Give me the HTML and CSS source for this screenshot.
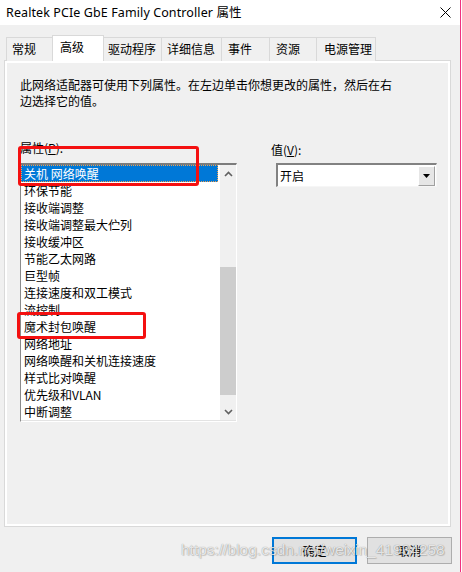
FILE: index.html
```html
<!DOCTYPE html>
<html lang="zh-CN">
<head>
  <meta charset="UTF-8" />
  <title>Realtek PCIe GbE Family Controller 属性</title>
  <link rel="stylesheet" href="styles.css">
</head>
<body>
  <div class="window">
    <div class="titlebar">
      <span class="title">Realtek PCIe GbE Family Controller 属性</span>
      <svg class="close" width="11" height="11" viewBox="0 0 11 11">
        <path d="M0.5 0.5 L10.5 10.5 M10.5 0.5 L0.5 10.5" stroke="#000" stroke-width="1" fill="none"/>
      </svg>
    </div>

    <div class="tabs">
      <div class="tab t1">常规</div>
      <div class="tab t2 active">高级</div>
      <div class="tab t3">驱动程序</div>
      <div class="tab t4">详细信息</div>
      <div class="tab t5">事件</div>
      <div class="tab t6">资源</div>
      <div class="tab t7">电源管理</div>
    </div>

    <div class="panel">
      <p class="desc">此网络适配器可使用下列属性。在左边单击你想更改的属性，然后在右<br>边选择它的值。</p>

      <div class="columns">
        <div class="col-left">
          <div class="label">属性(<u>P</u>):</div>
          <div class="listbox">
            <ul class="items">
              <li class="selected">关机 网络唤醒</li>
              <li>环保节能</li>
              <li>接收端调整</li>
              <li>接收端调整最大伫列</li>
              <li>接收缓冲区</li>
              <li>节能乙太网路</li>
              <li>巨型帧</li>
              <li>连接速度和双工模式</li>
              <li>流控制</li>
              <li>魔术封包唤醒</li>
              <li>网络地址</li>
              <li>网络唤醒和关机连接速度</li>
              <li>样式比对唤醒</li>
              <li>优先级和VLAN</li>
              <li>中断调整</li>
            </ul>
            <div class="scrollbar">
              <div class="sb-btn">
                <svg width="9" height="6" viewBox="0 0 9 6"><path d="M1 5 L4.5 1.5 L8 5" stroke="#606060" stroke-width="1.6" fill="none"/></svg>
              </div>
              <div class="sb-track"><div class="sb-thumb"></div></div>
              <div class="sb-btn">
                <svg width="9" height="6" viewBox="0 0 9 6"><path d="M1 1 L4.5 4.5 L8 1" stroke="#606060" stroke-width="1.6" fill="none"/></svg>
              </div>
            </div>
          </div>
        </div>

        <div class="col-right">
          <div class="label">值(<u>V</u>):</div>
          <div class="select">
            <span class="select-value">开启</span>
            <span class="select-btn">
              <svg width="7" height="4" viewBox="0 0 7 4"><path d="M0 0 L7 0 L3.5 4 Z" fill="#000"/></svg>
            </span>
          </div>
        </div>
      </div>
    </div>

    <div class="buttons">
      <button class="btn default">确定</button>
      <button class="btn">取消</button>
    </div>

    <!-- annotations drawn over the screenshot -->
    <div class="mark mark-1"></div>
    <div class="mark mark-2"></div>
    <div class="watermark">https://blog.csdn.net/weixin_41934258</div>
  </div>
</body>
</html>
```

FILE: styles.css
```css
* { box-sizing: border-box; }
body {
  margin: 0;
  background: #fff;
  font-family: "Noto Sans CJK SC", "Noto Sans", sans-serif;
  font-size: 12px;
  color: #000;
}
.window {
  position: relative;
  width: 461px;
  height: 572px;
  background: #f0f0f0;
  border-right: 1px solid #f0307f;
}
.titlebar {
  height: 25px;
  background: #fff;
  display: flex;
  align-items: center;
  justify-content: space-between;
  padding: 0 9px 3px 6px;
}
.title {
  font-family: "Noto Sans", "Noto Sans CJK SC", sans-serif;
  font-size: 12.5px;
  letter-spacing: 0.1px;
}
.close { margin-top: 2px; }

.tabs {
  display: flex;
  align-items: flex-end;
  height: 26px;
  margin-top: 10px;
  padding-left: 6px;
}
.tab {
  height: 24px;
  line-height: 22px;
  border: 1px solid #d9d9d9;
  border-bottom: none;
  margin-right: -1px;
  background: #f0f0f0;
}
.tab.active {
  position: relative;
  z-index: 1;
  height: 26px;
  line-height: 22px;
  background: #fff;
}
.t1 { width: 47px; padding-left: 5px; }
.t2 { width: 52px; padding-left: 7px; }
.t3 { width: 59px; padding-left: 4px; }
.t4 { width: 61px; padding-left: 5px; }
.t5 { width: 49px; padding-left: 6px; }
.t6 { width: 48px; padding-left: 6px; }
.t7 { width: 60px; padding-left: 7px; }

.panel {
  margin: -1px 0 0 4px;
  width: 447px;
  height: 467px;
  border: 1px solid #d9d9d9;
  box-shadow: inset 0 0 0 2px #fff;
  padding: 16px 0 0 15px;
}
.desc {
  margin: 0;
  line-height: 16px;
}
.columns {
  display: flex;
  margin-top: 30px;
}
.label {
  line-height: 17px;
  height: 17px;
}
.label u { text-decoration-thickness: 1px; text-underline-offset: 1px; }

.col-left { width: 217px; }
.listbox {
  margin-top: 7px;
  height: 259px;
  display: flex;
  background: #fff;
  border-top: 2px solid #7c7c7c;
  border-left: 1px solid #8a8a8a;
  border-right: 1px solid #fff;
  border-bottom: 1px solid #fff;
  box-shadow: inset 0 -1px 0 #e3e3e3, inset -1px 0 0 #e3e3e3;
}
.items {
  list-style: none;
  margin: 0;
  padding: 0;
  flex: 1;
}
.items li {
  height: 17px;
  line-height: 17px;
  padding-left: 3px;
  margin-right: 2px;
  white-space: nowrap;
}
.items li.selected {
  background: #0078d7;
  color: #fff;
  outline: 1px dotted #f0a050;
  outline-offset: -1px;
}
.scrollbar {
  width: 16px;
  height: 255px;
  background: #f0f0f0;
  display: flex;
  flex-direction: column;
}
.sb-btn {
  height: 17px;
  display: flex;
  align-items: center;
  justify-content: center;
}
.sb-track { flex: 1; }
.sb-thumb {
  margin-top: 85px;
  height: 128px;
  background: #cdcdcd;
}

.col-right {
  margin-left: 34px;
  padding-top: 2px;
}
.select {
  margin: 5px 0 0 5px;
  width: 161px;
  height: 24px;
  display: flex;
  align-items: center;
  background: #fff;
  border-top: 2px solid #828282;
  border-left: 2px solid #828282;
  border-right: 1px solid #f6f6f6;
  border-bottom: 1px solid #f6f6f6;
}
.select-value {
  flex: 1;
  padding-left: 2px;
  line-height: 20px;
}
.select-btn {
  width: 17px;
  height: 20px;
  margin-right: 1px;
  background: #e6e6e6;
  border: 1px solid #fff;
  border-right-color: #a0a0a0;
  border-bottom-color: #a0a0a0;
  display: flex;
  align-items: center;
  justify-content: center;
}

.buttons {
  display: flex;
  justify-content: flex-end;
  gap: 10px;
  margin-top: 10px;
  padding-right: 8px;
}
.btn {
  width: 85px;
  height: 27px;
  background: #e1e1e1;
  border: 1px solid #adadad;
  font-family: "Noto Sans CJK SC", sans-serif;
  font-size: 12px;
  color: #000;
  padding: 0;
}
.btn.default { border: 2px solid #0078d7; }

.mark {
  position: absolute;
  border: 3px solid #f41010;
  border-radius: 3px;
}
.mark-1 { left: 18px; top: 146px; width: 181px; height: 40px; }
.mark-2 { left: 17px; top: 312px; width: 129px; height: 27px; }

.watermark {
  position: absolute;
  left: 181px;
  top: 541px;
  font-family: "Liberation Sans", sans-serif;
  font-size: 15.5px;
  color: rgba(255, 255, 255, 0.8);
  text-shadow: 0 0 1px rgba(0, 0, 0, 0.45), 1px 1px 1px rgba(0, 0, 0, 0.15);
  white-space: nowrap;
}
```
